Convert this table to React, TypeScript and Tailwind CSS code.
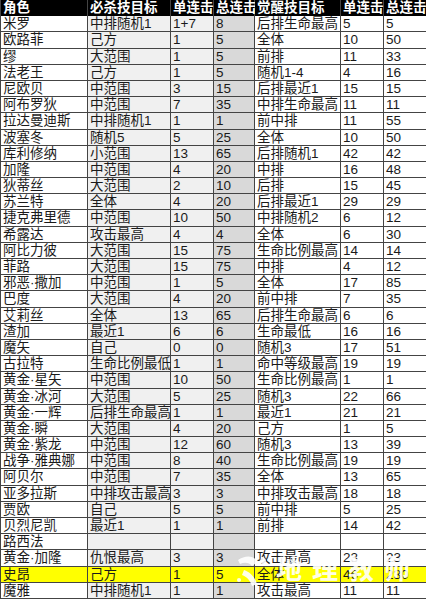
const headers = ["角色", "必杀技目标", "单连击", "总连击", "觉醒技目标", "单连击", "总连击"];

const rows: string[][] = [
  ["米罗", "中排随机1", "1+7", "8", "后排生命最高", "5", "5"],
  ["欧路菲", "己方", "1", "5", "全体", "10", "50"],
  ["缪", "大范围", "1", "5", "前排", "11", "33"],
  ["法老王", "己方", "1", "5", "随机1-4", "4", "16"],
  ["尼欧贝", "中范围", "3", "15", "后排最近1", "15", "15"],
  ["阿布罗狄", "中范围", "7", "35", "中排生命最高", "11", "11"],
  ["拉达曼迪斯", "中排随机1", "1", "1", "前中排", "11", "55"],
  ["波塞冬", "随机5", "5", "25", "全体", "10", "50"],
  ["库利修纳", "小范围", "13", "65", "后排随机1", "42", "42"],
  ["加隆", "中范围", "4", "20", "中排", "16", "48"],
  ["狄蒂丝", "大范围", "2", "10", "后排", "15", "45"],
  ["苏兰特", "全体", "4", "20", "后排最近1", "29", "29"],
  ["捷克弗里德", "中范围", "10", "50", "中排随机2", "6", "12"],
  ["希露达", "攻击最高", "4", "4", "全体", "6", "30"],
  ["阿比力彼", "大范围", "15", "75", "生命比例最高", "14", "14"],
  ["菲路", "大范围", "15", "75", "中排", "4", "12"],
  ["邪恶·撒加", "中范围", "1", "5", "全体", "17", "85"],
  ["巴度", "大范围", "4", "20", "前中排", "7", "35"],
  ["艾莉丝", "全体", "13", "65", "后排生命最高", "6", "6"],
  ["渣加", "最近1", "6", "6", "生命最低", "16", "16"],
  ["魔矢", "自己", "0", "0", "随机3", "17", "51"],
  ["古拉特", "生命比例最低", "1", "1", "命中等级最高", "19", "19"],
  ["黄金·星矢", "中范围", "10", "50", "生命比例最高", "1", "1"],
  ["黄金·冰河", "大范围", "5", "25", "随机3", "22", "66"],
  ["黄金·一辉", "后排生命最高", "1", "1", "最近1", "21", "21"],
  ["黄金·瞬", "大范围", "4", "20", "己方", "1", "5"],
  ["黄金·紫龙", "中范围", "12", "60", "随机3", "13", "39"],
  ["战争·雅典娜", "中范围", "8", "40", "生命比例最高", "19", "19"],
  ["阿贝尔", "中范围", "7", "35", "全体", "13", "65"],
  ["亚多拉斯", "中排攻击最高", "3", "3", "中排攻击最高", "18", "18"],
  ["贾欧", "自己", "5", "5", "前中排", "5", "25"],
  ["贝烈尼凯", "最近1", "1", "1", "前排", "14", "42"],
  ["路西法", "", "", "", "", "", ""],
  ["黄金·加隆", "仇恨最高", "3", "3", "攻击最高", "23", "23"],
  ["史昂", "己方", "1", "5", "全体", "46", "230"],
  ["魔雅", "中排随机1", "1", "1", "攻击最高", "11", "11"],
];

const colBg = ["bg-white", "bg-[#f0f0f0]", "bg-[#f0f0f0]", "bg-[#d9d9d9]", "bg-white", "bg-white", "bg-white"];

export default function App() {
  return (
    <div
      className="relative w-[426px] h-[600px] overflow-hidden bg-white text-[13.5px] text-[#1a1a1a]"
      style={{ fontFamily: '"Liberation Sans", "Noto Sans CJK SC", sans-serif' }}
    >
      <div className="grid grid-cols-[87px_83px_43px_41px_86px_43px_43px] auto-rows-[16.2px] border-l border-[#444]">
        {headers.map((h, i) => (
          <div
            key={i}
            className="bg-black text-white font-bold pl-[2px] leading-[16px] whitespace-nowrap border-r border-[#444]"
          >
            {h}
          </div>
        ))}
        {rows.map((r, ri) =>
          r.map((c, ci) => (
            <div
              key={ri + "-" + ci}
              className={`${r[0] === "史昂" ? "bg-[#ffff00]" : colBg[ci]} pl-[2px] leading-[16px] whitespace-nowrap border-b border-r border-[#444]`}
            >
              {c}
            </div>
          ))
        )}
      </div>

      {/* watermark */}
      <div className="absolute left-[232px] top-[550px] flex items-center gap-[4px] text-white opacity-90">
        <svg width="40" height="40" viewBox="0 0 40 40" fill="white">
          <path d="M6 10c7-5 16-5 20 2l-6 4c-3-4-8-4-12-2z" />
          <path d="M12 20c6 2 11 7 13 14l-5 2c-2-6-5-9-10-11z" />
          <circle cx="31" cy="11" r="3" />
          <circle cx="7" cy="30" r="2" />
        </svg>
        <span className="text-[26px] font-bold tracking-[10px] leading-none">地理教师</span>
      </div>
    </div>
  );
}
